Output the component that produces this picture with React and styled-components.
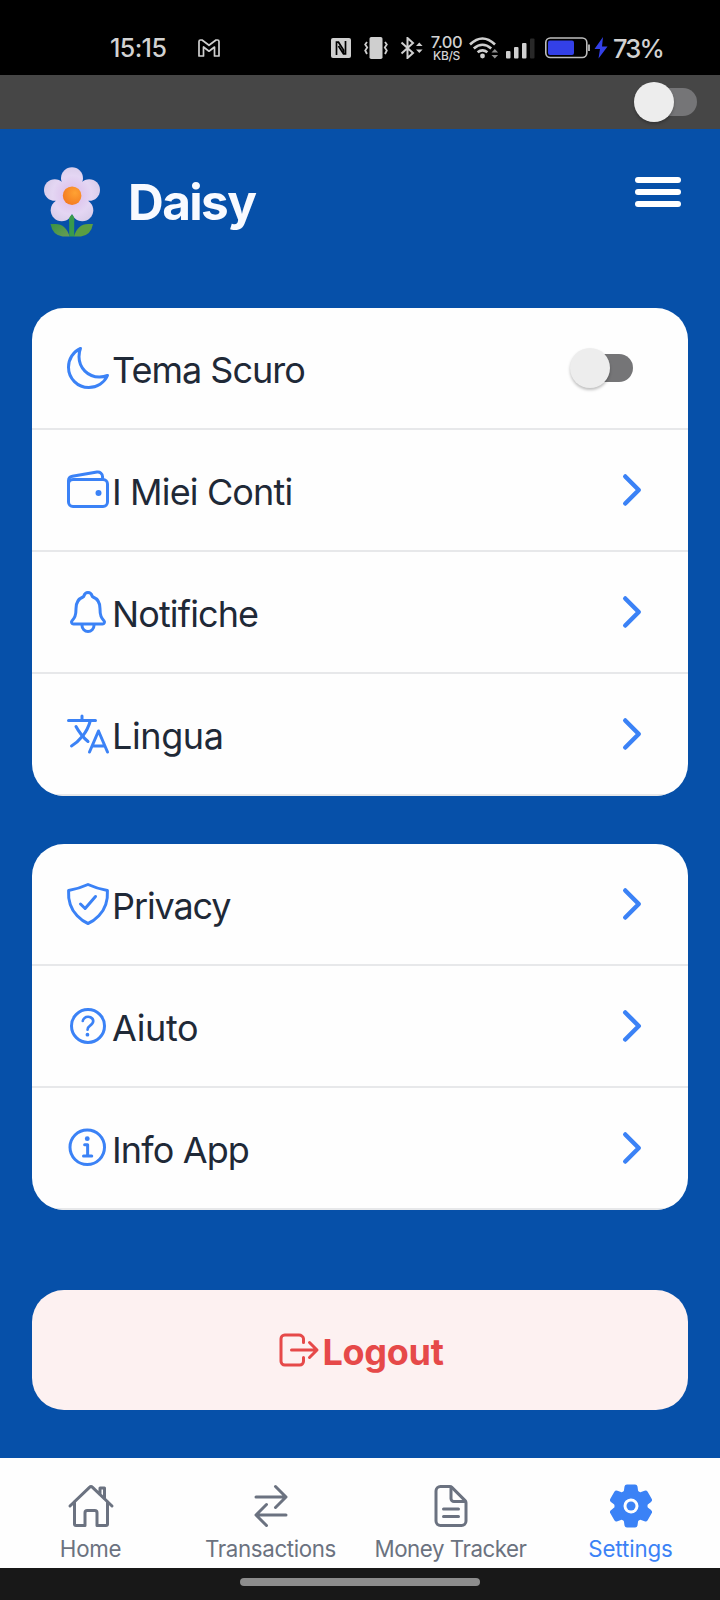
import React from "react";
import styled, { createGlobalStyle } from "styled-components";
import {
  IoMoonOutline,
  IoWalletOutline,
  IoNotificationsOutline,
  IoLanguageOutline,
  IoShieldCheckmarkOutline,
  IoHelpCircleOutline,
  IoInformationCircleOutline,
  IoLogOutOutline,
  IoHomeOutline,
  IoSwapHorizontalOutline,
  IoDocumentTextOutline,
  IoSettings,
  IoChevronForward,
} from "react-icons/io5";

const GlobalStyle = createGlobalStyle`
  * { box-sizing: border-box; }
  body {
    margin: 0;
    background: #0650a9;
    font-family: Inter, "Liberation Sans", sans-serif;
  }
  svg { display: block; flex: none; }
`;

const Screen = styled.div`
  width: 720px;
  height: 1600px;
  display: flex;
  flex-direction: column;
  overflow: hidden;
  background: #0650a9;
`;

const StatusBar = styled.div`
  height: 75px;
  flex: none;
  padding: 21px 58px 0 110px;
  display: flex;
  justify-content: space-between;
  background: #000;
  color: #d2d2d2;
`;

const StatusGroup = styled.div`
  height: 54px;
  display: flex;
  align-items: center;
`;

const StatusIcon = styled.span`
  flex: none;
  margin-right: ${(p) => p.$gap || 0}px;
`;

const Clock = styled.span`
  width: 57px;
  margin-right: 31px;
  font-size: 25px;
  font-weight: 500;
  letter-spacing: -0.6px;
  white-space: nowrap;
`;

const Speed = styled.div`
  width: 33px;
  margin-right: 6px;
  display: flex;
  flex-direction: column;
  align-items: center;
  font-size: 16.5px;
  line-height: 15px;
  font-weight: 500;
  white-space: nowrap;
  letter-spacing: -0.4px;
  small {
    font-size: 12px;
    line-height: 12px;
    letter-spacing: -0.3px;
  }
`;

const Percent = styled.span`
  width: 49px;
  margin-left: 4px;
  font-size: 25.5px;
  font-weight: 500;
  letter-spacing: -1.8px;
  white-space: nowrap;
`;

const TopStrip = styled.div`
  height: 54px;
  flex: none;
  padding-right: 23px;
  display: flex;
  align-items: center;
  justify-content: flex-end;
  background: #464646;
`;

const Track = styled.div`
  width: 56px;
  height: 28px;
  margin-right: ${(p) => p.$inset || 0}px;
  border-radius: 14px;
  display: flex;
  align-items: center;
  background: ${(p) => p.$color};
`;

const Thumb = styled.div`
  width: 40.5px;
  height: 40.5px;
  flex: none;
  margin-left: -7.5px;
  border-radius: 50%;
  background: #ededed;
  box-shadow: 0 2px 3px rgba(0, 0, 0, 0.25);
`;

const Header = styled.header`
  height: 179px;
  flex: none;
  padding: 38px 39px 0 44px;
  display: flex;
  align-items: flex-start;
`;

const Brand = styled.h1`
  margin: 4px 0 0 28px;
  flex: 1;
  font-size: 49.5px;
  line-height: 62px;
  font-weight: 700;
  letter-spacing: -1.6px;
  color: #f8faff;
`;

const MenuButton = styled.div`
  width: 46px;
  margin-top: 9.5px;
  display: flex;
  flex-direction: column;
  gap: 6px;
`;

const MenuLine = styled.span`
  height: 6.3px;
  border-radius: 3px;
  background: #fff;
`;

const Content = styled.main`
  flex: 1;
  padding: 0 32px;
  display: flex;
  flex-direction: column;
`;

const Card = styled.section`
  margin-bottom: ${(p) => p.$gap}px;
  border-radius: 32px;
  overflow: hidden;
  background: #fefefe;
`;

const Row = styled.div`
  height: 122px;
  padding: 0 32px;
  display: flex;
  align-items: center;
  border-bottom: 2px solid #e7e8ea;
  color: #3b82f6;
`;

const RowLabel = styled.span`
  flex: 1;
  padding-top: 3px;
  font-size: 36px;
  line-height: 44px;
  letter-spacing: ${(p) => p.$spacing}px;
  white-space: nowrap;
  color: #1f2937;
`;

const LogoutButton = styled.div`
  height: 120px;
  padding-right: 2px;
  border-radius: 32px;
  display: flex;
  align-items: center;
  justify-content: center;
  background: #fdf1f1;
  color: #e64949;
`;

const LogoutLabel = styled.span`
  width: 121px;
  padding-top: 3px;
  font-size: 36px;
  line-height: 44px;
  font-weight: 700;
  letter-spacing: -0.3px;
`;

const TabBar = styled.nav`
  height: 110px;
  flex: none;
  display: grid;
  grid-template-columns: repeat(4, 1fr);
  background: #fefefe;
`;

const Tab = styled.div`
  padding: 24px 0 0 1px;
  display: flex;
  flex-direction: column;
  align-items: center;
  color: ${(p) => (p.$active ? "#3b82f6" : "#6b7280")};
`;

const TabLabel = styled.span`
  margin-top: 5px;
  font-size: 22.3px;
  line-height: 28px;
  letter-spacing: ${(p) => p.$spacing}px;
  white-space: nowrap;
`;

const GestureBar = styled.div`
  height: 32px;
  flex: none;
  display: flex;
  align-items: flex-start;
  justify-content: center;
  padding-top: 10px;
  background: #181818;
`;

const GesturePill = styled.div`
  width: 240px;
  height: 8px;
  border-radius: 4px;
  background: #8c8c8c;
`;

const MailIcon = () => (
  <svg width="22" height="18" viewBox="0 0 22 18" fill="none" stroke="#d0d0d0" strokeWidth="1.7" strokeLinejoin="round">
    <path d="M1 2.500Q1 1 2.500 1H4l7 5.300L18 1h1.500Q21 1 21 2.500V17h-4.500V8L11 12.200 5.500 8v9H1z" />
  </svg>
);

const NfcIcon = () => (
  <svg width="20" height="20" viewBox="0 0 20 20">
    <rect width="20" height="20" rx="2" fill="#cfcfcf" />
    <path d="M5.500 17V4.200h2L12.500 12v4.500M14.500 3v12.800h-2L7.500 8" fill="none" stroke="#000" strokeWidth="1.700" />
  </svg>
);

const VibrateIcon = () => (
  <svg width="24" height="22" viewBox="0 0 24 22">
    <rect x="5.500" width="13" height="22" rx="1.800" fill="#cfcfcf" />
    <path d="M3 5 1.200 7.500l2 3-2 3L3 17M21 5l1.800 2.500-2 3 2 3L21 17" fill="none" stroke="#cfcfcf" strokeWidth="1.800" />
  </svg>
);

const BluetoothIcon = () => (
  <svg width="23" height="22" viewBox="0 0 23 22">
    <path d="M1.500 5.500 13 16l-5.500 5V1L13 6 1.500 16.500" fill="none" stroke="#cfcfcf" strokeWidth="2" />
    <path d="m16 9 3.300-3.500L22.600 9zM16 12.500l3.300 3.500 3.300-3.500z" fill="#cfcfcf" />
  </svg>
);

const WifiIcon = () => (
  <svg width="30" height="24" viewBox="0 0 30 24">
    <g fill="none" stroke="#cfcfcf" strokeWidth="2.600">
      <path d="M1 8.500Q13.500-3.500 26 8.500" />
      <path d="M4.800 12.500q8.700-7.500 17.400 0" />
      <path d="M8.600 16.300q4.900-4 9.800 0" />
    </g>
    <circle cx="13.500" cy="20" r="2.400" fill="#cfcfcf" />
    <path d="m22.500 16.500 3.300-3.500 3.300 3.500zM22.500 19l3.300 3.500 3.300-3.500z" fill="#8f8f8f" />
  </svg>
);

const SignalIcon = () => (
  <svg width="30" height="21" viewBox="0 0 30 21">
    <rect x="0" y="13" width="4.500" height="7.500" rx="1" fill="#cfcfcf" />
    <rect x="8" y="9" width="4.500" height="11.500" rx="1" fill="#cfcfcf" />
    <rect x="16" y="5" width="4.500" height="15.500" rx="1" fill="#cfcfcf" />
    <rect x="24" y="0.500" width="4.500" height="20" rx="1" fill="#282828" />
  </svg>
);

const BatteryIcon = () => (
  <svg width="64" height="22" viewBox="0 0 64 22">
    <rect x="0.800" y="1" width="41" height="19.500" rx="4.500" fill="none" stroke="#bdbdbd" strokeWidth="1.600" />
    <path d="M44 7.500v6.500" stroke="#bdbdbd" strokeWidth="1.800" />
    <rect x="3" y="3.500" width="26" height="14.500" rx="2" fill="#3340e8" />
    <path d="M58 0 49.500 12h5.500l-1.500 9.500L62.500 9.500H57z" fill="#3340e8" />
  </svg>
);

const FlowerLogo = () => (
  <svg width="56" height="70" viewBox="0 0 56 70">
    <defs>
      <radialGradient id="petal" cx="28" cy="28" r="30" gradientUnits="userSpaceOnUse">
        <stop offset="0.300" stopColor="#dfc7ee" />
        <stop offset="0.650" stopColor="#e4d6f3" />
        <stop offset="1" stopColor="#d8cce9" />
      </radialGradient>
      <radialGradient id="core" cx="0.650" cy="0.350" r="0.700">
        <stop offset="0" stopColor="#ffa233" />
        <stop offset="1" stopColor="#f47b20" />
      </radialGradient>
      <linearGradient id="leaf" x1="0" y1="0" x2="1" y2="1">
        <stop offset="0" stopColor="#399443" />
        <stop offset="1" stopColor="#6a9c55" />
      </linearGradient>
    </defs>
    <path d="M6.500 57h5Q22 57 25.500 69.500h-7Q8.500 68 6.500 57z" fill="url(#leaf)" />
    <path d="M49 57h-5Q33.500 57 30 69.500h7Q47 68 49 57z" fill="#5b9e42" />
    <path d="M25.200 50h5v19.500h-5z" fill="#399b4c" />
    <g fill="url(#petal)">
      <circle cx="28" cy="11.200" r="11" />
      <circle cx="10.800" cy="23" r="10.800" />
      <circle cx="45.200" cy="23" r="10.800" />
      <circle cx="17.700" cy="43.300" r="11" />
      <circle cx="38.300" cy="43.300" r="11" />
      <circle cx="28" cy="29" r="17" />
    </g>
    <path d="M25.200 54.500V51q1-2.500 2.800-3.500 1.800 1 2.200 3.500v3.500z" fill="#399b4c" />
    <circle cx="28.100" cy="28.700" r="9.300" fill="url(#core)" />
  </svg>
);

const Toggle = ({ color, inset }) => (
  <Track $color={color} $inset={inset}>
    <Thumb />
  </Track>
);

const preferences = [
  { label: "Tema Scuro", Icon: IoMoonOutline, spacing: -1, toggle: true },
  { label: "I Miei Conti", Icon: IoWalletOutline, spacing: -0.85 },
  { label: "Notifiche", Icon: IoNotificationsOutline, spacing: -0.88 },
  { label: "Lingua", Icon: IoLanguageOutline, spacing: -0.4 },
];

const support = [
  { label: "Privacy", Icon: IoShieldCheckmarkOutline, spacing: -1.1 },
  { label: "Aiuto", Icon: IoHelpCircleOutline, spacing: -0.35 },
  { label: "Info App", Icon: IoInformationCircleOutline, spacing: -0.85 },
];

const tabs = [
  { label: "Home", Icon: IoHomeOutline, spacing: -0.3 },
  { label: "Transactions", Icon: IoSwapHorizontalOutline, spacing: -0.35 },
  { label: "Money Tracker", Icon: IoDocumentTextOutline, spacing: -0.45 },
  { label: "Settings", Icon: IoSettings, spacing: -0.1, active: true },
];

const SettingsCard = ({ items, gap }) => (
  <Card $gap={gap}>
    {items.map(({ label, Icon, spacing, toggle }) => (
      <Row key={label}>
        <Icon size={48} />
        <RowLabel $spacing={spacing}>{label}</RowLabel>
        {toggle ? <Toggle color="#757577" inset={23} /> : <IoChevronForward size={48} />}
      </Row>
    ))}
  </Card>
);

export default function App() {
  return (
    <>
      <GlobalStyle />
      <Screen>
        <StatusBar>
          <StatusGroup>
            <Clock>15:15</Clock>
            <MailIcon />
          </StatusGroup>
          <StatusGroup>
            <StatusIcon $gap={13}><NfcIcon /></StatusIcon>
            <StatusIcon $gap={12}><VibrateIcon /></StatusIcon>
            <StatusIcon $gap={7}><BluetoothIcon /></StatusIcon>
            <Speed>
              <span>7.00</span>
              <small>KB/S</small>
            </Speed>
            <StatusIcon $gap={7}><WifiIcon /></StatusIcon>
            <StatusIcon $gap={9}><SignalIcon /></StatusIcon>
            <BatteryIcon />
            <Percent>73%</Percent>
          </StatusGroup>
        </StatusBar>
        <TopStrip>
          <Toggle color="#757577" />
        </TopStrip>
        <Header>
          <FlowerLogo />
          <Brand>Daisy</Brand>
          <MenuButton>
            <MenuLine />
            <MenuLine />
            <MenuLine />
          </MenuButton>
        </Header>
        <Content>
          <SettingsCard items={preferences} gap={48} />
          <SettingsCard items={support} gap={80} />
          <LogoutButton>
            <IoLogOutOutline size={48} />
            <LogoutLabel>Logout</LogoutLabel>
          </LogoutButton>
        </Content>
        <TabBar>
          {tabs.map(({ label, Icon, spacing, active }) => (
            <Tab key={label} $active={active}>
              <Icon size={48} />
              <TabLabel $spacing={spacing}>{label}</TabLabel>
            </Tab>
          ))}
        </TabBar>
        <GestureBar>
          <GesturePill />
        </GestureBar>
      </Screen>
    </>
  );
}
